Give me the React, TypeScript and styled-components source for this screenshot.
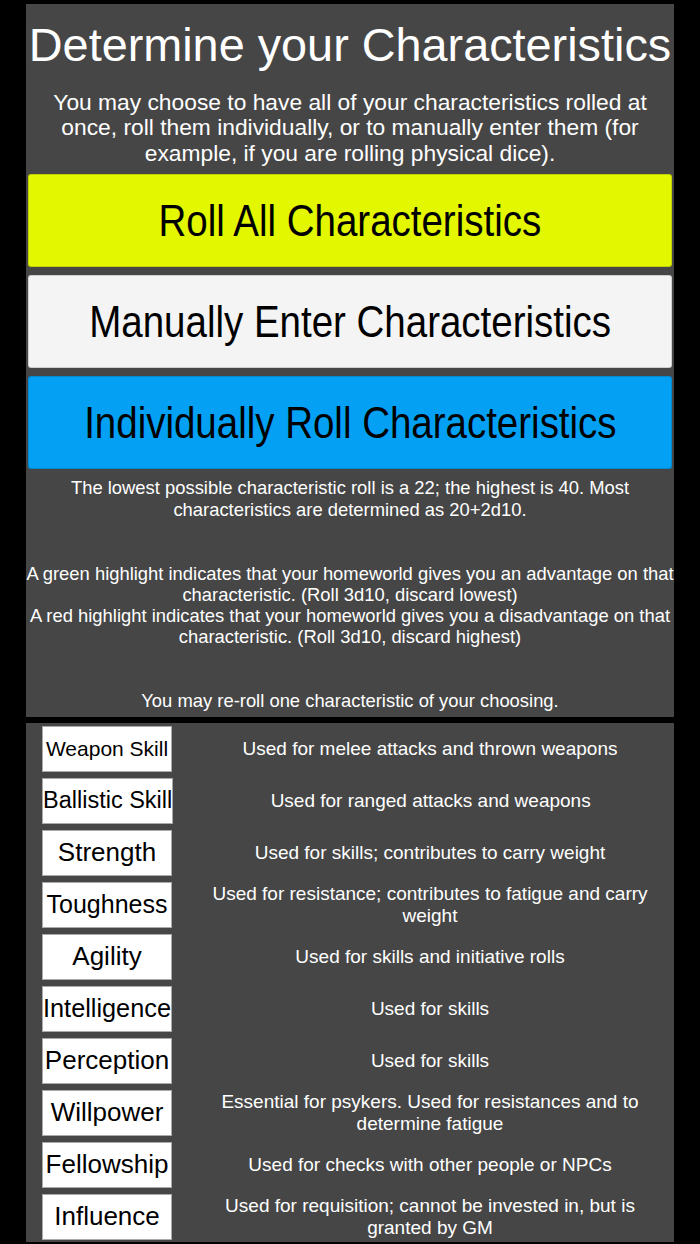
import React from "react";
import styled, { createGlobalStyle } from "styled-components";

interface Characteristic {
  name: string;
  size: number;
  description: string;
}

const characteristics: Characteristic[] = [
  { name: "Weapon Skill", size: 21, description: "Used for melee attacks and thrown weapons" },
  { name: "Ballistic Skill", size: 23.5, description: "Used for ranged attacks and weapons" },
  { name: "Strength", size: 26, description: "Used for skills; contributes to carry weight" },
  { name: "Toughness", size: 25, description: "Used for resistance; contributes to fatigue and carry weight" },
  { name: "Agility", size: 26, description: "Used for skills and initiative rolls" },
  { name: "Intelligence", size: 25.3, description: "Used for skills" },
  { name: "Perception", size: 26, description: "Used for skills" },
  { name: "Willpower", size: 26, description: "Essential for psykers. Used for resistances and to determine fatigue" },
  { name: "Fellowship", size: 26, description: "Used for checks with other people or NPCs" },
  { name: "Influence", size: 26, description: "Used for requisition; cannot be invested in, but is granted by GM" },
];

const App: React.FC = () => {
  return (
    <Page>
      <GlobalStyle />
      <Panel>
        <Title>Determine your Characteristics</Title>
        <Intro>
          You may choose to have all of your characteristics rolled at once, roll them
          individually, or to manually enter them (for example, if you are rolling physical dice).
        </Intro>
        <Buttons>
          <ChoiceButton $bg="#e2f700">
            <Narrow>Roll All Characteristics</Narrow>
          </ChoiceButton>
          <ChoiceButton $bg="#f4f4f4">
            <Narrow>Manually Enter Characteristics</Narrow>
          </ChoiceButton>
          <ChoiceButton $bg="#03a0f4">
            <Narrow>Individually Roll Characteristics</Narrow>
          </ChoiceButton>
        </Buttons>
        <Notes>
          The lowest possible characteristic roll is a 22; the highest is 40. Most characteristics
          are determined as 20+2d10.
          <br />
          <br />
          <br />
          A green highlight indicates that your homeworld gives you an advantage on that
          characteristic. (Roll 3d10, discard lowest)
          <br />
          A red highlight indicates that your homeworld gives you a disadvantage on that
          characteristic. (Roll 3d10, discard highest)
          <br />
          <br />
          <br />
          You may re-roll one characteristic of your choosing.
        </Notes>
      </Panel>
      <ListPanel>
        {characteristics.map((c) => (
          <Row key={c.name}>
            <NameBox $size={c.size}>{c.name}</NameBox>
            <Description>{c.description}</Description>
          </Row>
        ))}
      </ListPanel>
    </Page>
  );
};

export default App;

const GlobalStyle = createGlobalStyle`
  html, body {
    margin: 0;
    padding: 0;
    background: #000;
  }
  body {
    font-family: "Liberation Sans", Arial, sans-serif;
  }
`;

const Page = styled.div`
  display: flex;
  flex-direction: column;
  gap: 6px;
  padding: 4px 26px;
  min-height: 1236px;
`;

const Panel = styled.section`
  background: #464646;
  color: #fff;
  padding: 15px 0 5px;
  text-align: center;
`;

const Title = styled.h1`
  margin: 0;
  font-size: 46.8px;
  font-weight: normal;
  line-height: 1.15;
`;

const Intro = styled.p`
  margin: 17px 0 8px;
  font-size: 22.8px;
  line-height: 25.5px;
`;

const Buttons = styled.div`
  display: flex;
  flex-direction: column;
  gap: 8px;
  padding: 0 2px;
`;

const ChoiceButton = styled.button<{ $bg: string }>`
  display: flex;
  align-items: center;
  justify-content: center;
  height: 93px;
  width: 100%;
  padding: 0;
  border: 1px solid rgba(0, 0, 0, 0.15);
  border-radius: 3px;
  background: ${(p) => p.$bg};
  color: #000;
  font-family: inherit;
  font-size: 45px;
  white-space: nowrap;
  overflow: hidden;
  cursor: pointer;
`;

/* the button captions are set in a condensed face; no narrow font is installed */
const Narrow = styled.span`
  display: inline-block;
  transform: scaleX(0.855);
`;

const Notes = styled.div`
  margin-top: 8px;
  font-size: 18.4px;
  line-height: 21.3px;
`;

const ListPanel = styled.section`
  background: #464646;
  padding: 3px 0 2px 16px;
  display: flex;
  flex-direction: column;
  gap: 6px;
`;

const Row = styled.div`
  display: flex;
  align-items: center;
  height: 46px;
`;

const NameBox = styled.div<{ $size: number }>`
  flex: 0 0 130px;
  height: 46px;
  box-sizing: border-box;
  display: flex;
  align-items: center;
  justify-content: center;
  background: #fff;
  border: 1px solid #aaa;
  color: #000;
  font-size: ${(p) => p.$size}px;
  white-space: nowrap;
`;

const Description = styled.div`
  flex: 1;
  padding: 0 14px 0 28px;
  color: #fff;
  font-size: 19px;
  line-height: 1.15;
  text-align: center;
`;
